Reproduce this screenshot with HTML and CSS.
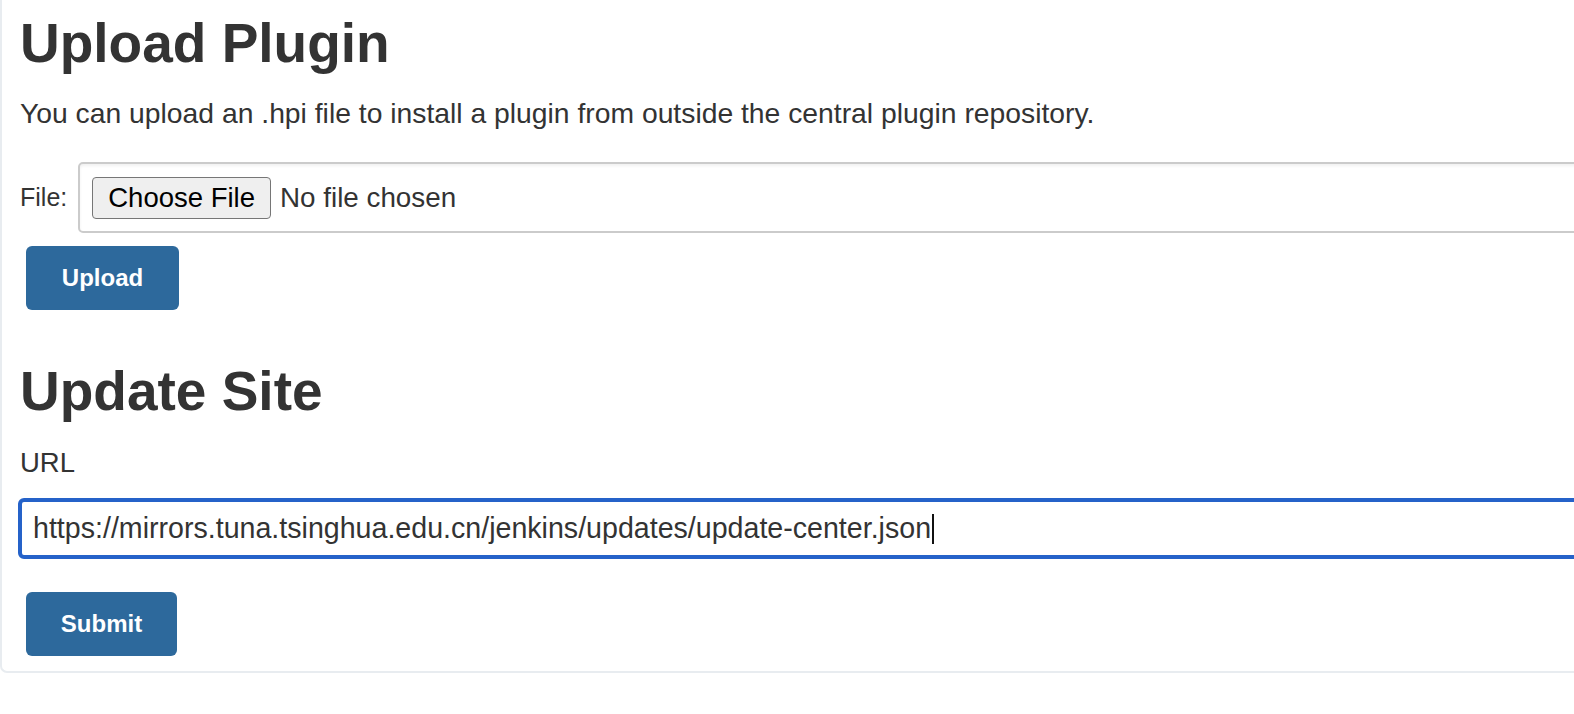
FILE: index.html
```html
<!DOCTYPE html>
<html lang="en">
<head>
<meta charset="utf-8">
<title>Advanced - Plugin Manager</title>
<link rel="stylesheet" href="styles.css">
</head>
<body>
<div class="panel">
  <section class="section">
    <h1 class="title">Upload Plugin</h1>
    <p class="desc">You can upload an .hpi file to install a plugin from outside the central plugin repository.</p>
    <form class="upload-form">
      <div class="file-row">
        <label class="file-label" for="file">File:</label>
        <div class="file-box">
          <input class="file-input" id="file" type="file" name="name">
        </div>
      </div>
      <button class="btn" type="button">Upload</button>
    </form>
  </section>
  <section class="section site">
    <h1 class="title">Update Site</h1>
    <div class="field-label">URL</div>
    <div class="url-field" role="textbox"><span class="url-text">https://mirrors.tuna.tsinghua.edu.cn/jenkins/updates/update-center.json</span><span class="caret"></span></div>
    <button class="btn submit" type="button">Submit</button>
  </section>
</div>
</body>
</html>
```

FILE: styles.css
```css
html, body {
  margin: 0;
  padding: 0;
  background: #ffffff;
}
body {
  font-family: "Liberation Sans", Arial, sans-serif;
  color: #333333;
  overflow: hidden;
}
.panel {
  border-left: 2px solid #e8ecf0;
  border-bottom: 2px solid #e8ecf0;
  border-bottom-left-radius: 7px;
  padding: 12px 0 15px 18px;
  width: 1700px;
  box-sizing: border-box;
}
.title {
  margin: 0;
  font-size: 55px;
  line-height: 63px;
  font-weight: 700;
  color: #333333;
}
.desc {
  margin: 22px 0 0 0;
  font-size: 28.3px;
  line-height: 32px;
}
.upload-form {
  margin-top: 33px;
}
.file-row {
  display: flex;
  align-items: center;
}
.file-label {
  font-size: 25px;
  margin-right: 11px;
}
.file-box {
  flex: 1;
  height: 71px;
  box-sizing: border-box;
  border: 2px solid #cbcbcb;
  border-radius: 5px;
  box-shadow: inset 0 2px 3px rgba(0,0,0,0.06);
  display: flex;
  align-items: center;
  padding-left: 12px;
}
.file-input {
  font-family: "Liberation Sans", Arial, sans-serif;
  font-size: 27.8px;
  color: #333;
}
.file-input::file-selector-button {
  font-family: "Liberation Sans", Arial, sans-serif;
  font-size: 27.5px;
  color: #000;
  background: #efefef;
  border: 1.5px solid #767676;
  border-radius: 4px;
  height: 42px;
  padding: 0 15px;
  margin-right: 9px;
}
.btn {
  display: block;
  margin: 13px 0 0 6px;
  width: 153px;
  height: 64px;
  border: none;
  border-radius: 6px;
  background: #2d699c;
  color: #ffffff;
  font-family: "Liberation Sans", Arial, sans-serif;
  font-size: 24px;
  font-weight: 700;
}
.site {
  margin-top: 50px;
}
.field-label {
  margin-top: 24px;
  font-size: 27.5px;
  line-height: 32px;
}
.url-field {
  margin: 19px 0 0 -2px;
  height: 61px;
  box-sizing: border-box;
  border: 4px solid #2562c9;
  border-radius: 6px;
  display: flex;
  align-items: center;
  padding-left: 11px;
  font-size: 28.6px;
  color: #333333;
}
.caret {
  display: inline-block;
  width: 2px;
  height: 30px;
  background: #111;
  margin-left: 1px;
}
.submit {
  margin-top: 33px;
  width: 151px;
}
```
